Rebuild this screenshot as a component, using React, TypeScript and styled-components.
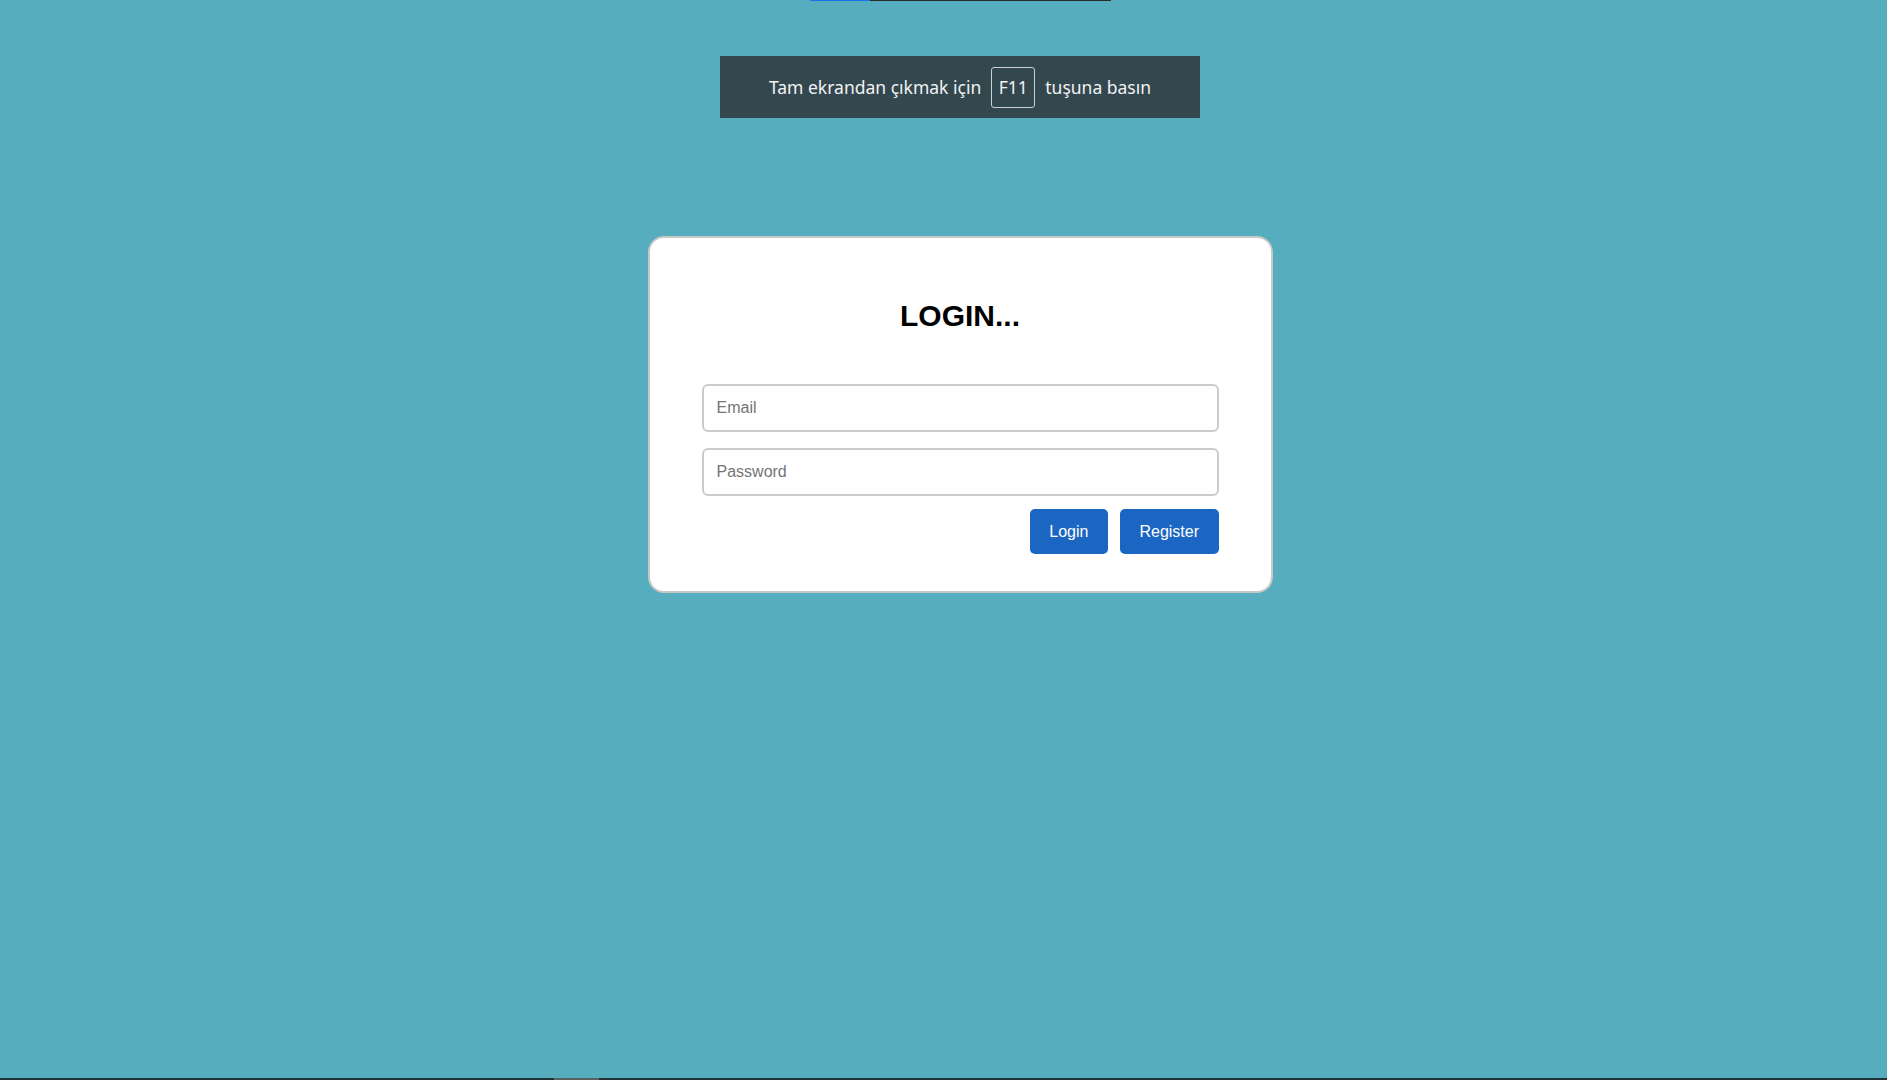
import React from "react";
import styled, { createGlobalStyle } from "styled-components";

const GlobalStyle = createGlobalStyle`
  html, body {
    margin: 0;
    padding: 0;
    background: #56adbe;
    overflow: hidden;
  }
  * { box-sizing: border-box; }
`;

const Page = styled.div`
  width: 1920px;
  height: 1080px;
  display: flex;
  flex-direction: column;
  align-items: center;
  background: #56adbe;
`;

const ProgressTrack = styled.div`
  display: flex;
  width: 301px;
  height: 1px;
  background: #2b2b2b;
  flex-shrink: 0;
`;

const ProgressFill = styled.div`
  height: 100%;
  background: #1a73e8;
`;

const Toast = styled.div`
  margin-top: 55px;
  width: 480px;
  height: 62px;
  background: #33474f;
  color: #f2f2f2;
  display: flex;
  align-items: center;
  justify-content: center;
  gap: 10px;
  font-family: "Noto Sans", "Open Sans", sans-serif;
  font-size: 17.5px;
  flex-shrink: 0;
`;

const Key = styled.span`
  display: inline-flex;
  align-items: center;
  justify-content: center;
  width: 44px;
  height: 41px;
  border: 1px solid #c9cfd2;
  border-radius: 3px;
`;

const Main = styled.main`
  flex: 1;
  display: flex;
  flex-direction: column;
  align-items: center;
`;

const Card = styled.form`
  margin-top: 118px;
  width: 625px;
  background: #ffffff;
  border: 2px solid #c8c8c8;
  border-radius: 16px;
  padding: 60px 52px 37px;
  display: flex;
  flex-direction: column;
  font-family: "Liberation Sans", Arial, sans-serif;
`;

const Title = styled.h2`
  margin: 0 0 50px;
  font-size: 30px;
  line-height: 36px;
  font-weight: 700;
  color: #000;
  text-align: center;
`;

const Field = styled.input<{ $last?: boolean }>`
  width: 100%;
  height: 48px;
  border: 2px solid #cccccc;
  border-radius: 6px;
  padding: 0 13px;
  font-family: "Liberation Sans", Arial, sans-serif;
  font-size: 16px;
  color: #222;
  outline: none;
  margin-bottom: ${(p) => (p.$last ? "13px" : "16px")};
  &::placeholder {
    color: #757575;
  }
`;

const Actions = styled.div`
  display: flex;
  justify-content: flex-end;
  gap: 12px;
`;

const Button = styled.button`
  height: 45px;
  padding: 0 19.5px;
  background: #1b66c2;
  color: #ffffff;
  border: none;
  border-radius: 5px;
  font-family: "Liberation Sans", Arial, sans-serif;
  font-size: 16px;
  cursor: pointer;
`;

const ScrollTrack = styled.div`
  width: 100%;
  height: 2px;
  background: #1f3236;
  display: flex;
  flex-shrink: 0;
`;

const ScrollThumb = styled.div`
  margin-left: 554px;
  width: 45px;
  height: 100%;
  background: #5a5f60;
`;

export default function App() {
  return (
    <>
      <GlobalStyle />
      <Page>
        <ProgressTrack>
          <ProgressFill style={{ width: "60px" }} />
        </ProgressTrack>
        <Toast>
          <span>Tam ekrandan çıkmak için</span>
          <Key>F11</Key>
          <span>tuşuna basın</span>
        </Toast>
        <Main>
          <Card onSubmit={(e) => e.preventDefault()}>
            <Title>LOGIN...</Title>
            <Field type="email" placeholder="Email" />
            <Field type="password" placeholder="Password" $last />
            <Actions>
              <Button type="submit">Login</Button>
              <Button type="button">Register</Button>
            </Actions>
          </Card>
        </Main>
        <ScrollTrack>
          <ScrollThumb />
        </ScrollTrack>
      </Page>
    </>
  );
}
